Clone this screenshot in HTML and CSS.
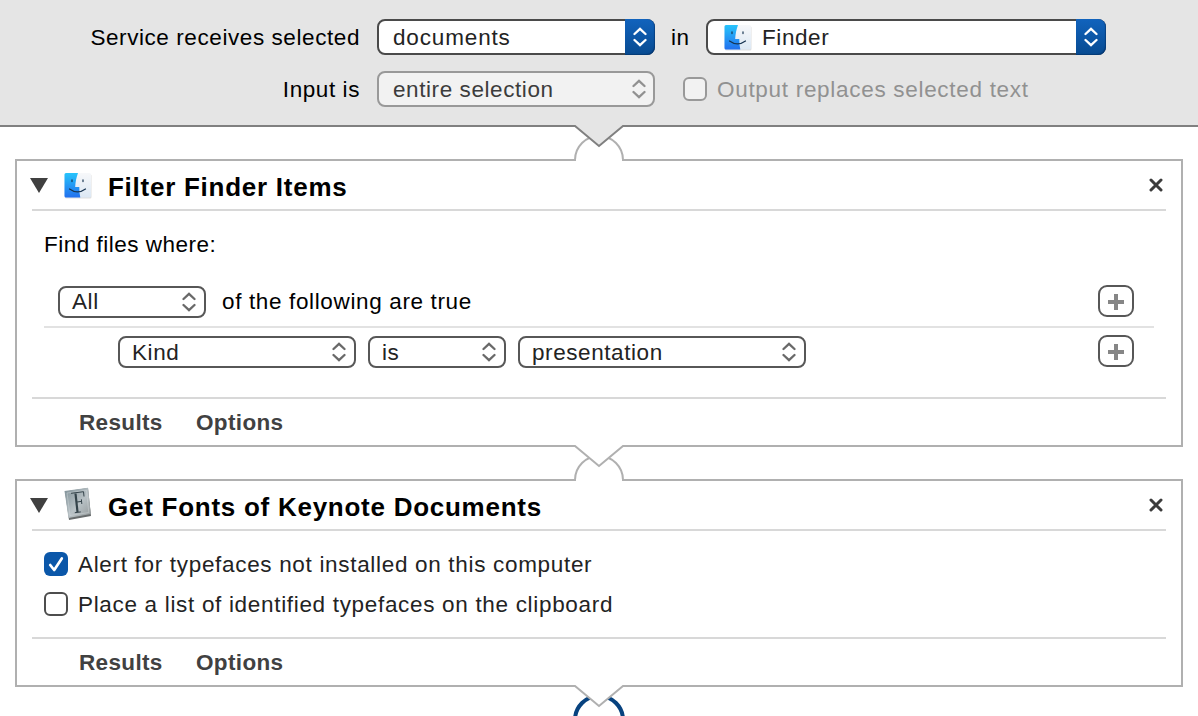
FILE: index.html
```html
<!DOCTYPE html>
<html lang="en">
<head>
<meta charset="utf-8">
<title>Automator Service</title>
<link rel="stylesheet" href="styles.css">
</head>
<body>
<svg class="defs" width="0" height="0" aria-hidden="true">
  <defs>
    <linearGradient id="faceBlue" x1="0" y1="0" x2="0" y2="1"><stop offset="0" stop-color="#27c4fb"/><stop offset="1" stop-color="#2270ee"/></linearGradient>
    <linearGradient id="faceLight" x1="0" y1="0" x2="0" y2="1"><stop offset="0" stop-color="#f7f8fa"/><stop offset="1" stop-color="#dce8f4"/></linearGradient>
    <linearGradient id="metal" x1="0" y1="0" x2="1" y2="1"><stop offset="0" stop-color="#7f9097"/><stop offset=".55" stop-color="#b9c2c6"/><stop offset="1" stop-color="#929899"/></linearGradient>
    <symbol id="finder" viewBox="0 0 28 26">
      <rect x="1" y="1.200" width="26.500" height="24.300" rx="1.5" fill="#000" opacity=".13"/>
      <rect x=".5" y="0" width="26.500" height="24.500" rx="1.5" fill="url(#faceLight)"/>
      <path d="M2 0H14C12.300 4.500 11.500 9 11.200 14H15.300C15.200 17.500 15.500 21 16.300 24.500H2Q.5 24.500 .5 23V1.500Q.5 0 2 0Z" fill="url(#faceBlue)"/>
      <path d="M8 6.800V8.600M19 6.800V8.600M5.500 16Q13.500 21.800 21.500 16" fill="none" stroke="#173451" stroke-width="1.200" stroke-linecap="round"/>
    </symbol>
    <symbol id="arrows" viewBox="0 0 14 20">
      <path d="M1.500 7L7 1.800L12.500 7M1.500 13L7 18.200L12.500 13" fill="none" stroke="currentColor" stroke-width="2.300" stroke-linecap="round" stroke-linejoin="miter"/>
    </symbol>
    <symbol id="triangle" viewBox="0 0 18 15"><path d="M0 0H18L9 15Z" fill="#404040"/></symbol>
    <symbol id="close" viewBox="0 0 14 14"><path d="M2 2L12 12M12 2L2 12" stroke="#3c3c3c" stroke-width="3" stroke-linecap="round"/></symbol>
    <symbol id="plus" viewBox="0 0 16 16"><path d="M8 0V16M0 8H16" stroke="#868686" stroke-width="4"/></symbol>
  </defs>
</svg>

<header class="service">
  <div class="service-row">
    <span class="service-label">Service receives selected</span>
    <div class="popup popup-lg popup-type popup-input">documents<span class="cap"><svg class="arrows"><use href="#arrows"/></svg></span></div>
    <span class="in">in</span>
    <div class="popup popup-lg popup-app"><svg class="finder"><use href="#finder"/></svg>Finder<span class="cap"><svg class="arrows"><use href="#arrows"/></svg></span></div>
  </div>
  <div class="service-row">
    <span class="service-label">Input is</span>
    <div class="popup popup-lg popup-type popup-off">entire selection<svg class="arrows"><use href="#arrows"/></svg></div>
    <span class="check check-off output-check"></span>
    <span class="output-label">Output replaces selected text</span>
  </div>
</header>

<main class="workflow">
  <svg class="link link-top" viewBox="0 0 56 40">
    <path d="M5 36A24 24 0 0 1 53 36" fill="#fff" stroke="#b0b0b0" stroke-width="2"/>
    <path d="M6 35H52V39H6Z" fill="#fff"/>
    <path d="M5 0V2L29 22L53 2V0Z" fill="#e5e5e5"/>
    <path d="M4.500 2H5L29 22L53 2H53.500" fill="none" stroke="#808080" stroke-width="2"/>
  </svg>

  <section class="action">
    <div class="action-head">
      <svg class="triangle"><use href="#triangle"/></svg>
      <svg class="finder"><use href="#finder"/></svg>
      <h2 class="title">Filter Finder Items</h2>
      <svg class="close"><use href="#close"/></svg>
    </div>
    <div class="filter">
      <p class="find">Find files where:</p>
      <div class="rule rule-all">
        <div class="popup w-all">All<svg class="arrows"><use href="#arrows"/></svg></div>
        <span class="rule-text">of the following are true</span>
        <span class="add"><svg class="plus"><use href="#plus"/></svg></span>
      </div>
      <div class="rule rule-kind">
        <div class="popup w-kind">Kind<svg class="arrows"><use href="#arrows"/></svg></div>
        <div class="popup w-is">is<svg class="arrows"><use href="#arrows"/></svg></div>
        <div class="popup w-value">presentation<svg class="arrows"><use href="#arrows"/></svg></div>
        <span class="add"><svg class="plus"><use href="#plus"/></svg></span>
      </div>
    </div>
    <div class="action-foot"><span class="tab tab-results">Results</span><span class="tab">Options</span></div>
    <svg class="link link-bottom" viewBox="0 0 56 40">
      <path d="M5 36A24 24 0 0 1 53 36" fill="#fff" stroke="#b0b0b0" stroke-width="2"/>
      <path d="M6 35H52V39H6Z" fill="#fff"/>
      <path d="M5 0V2L29 22L53 2V0Z" fill="#fff"/>
      <path d="M4.500 2H5L29 22L53 2H53.500" fill="none" stroke="#b0b0b0" stroke-width="2"/>
    </svg>
  </section>

  <section class="action">
    <div class="action-head">
      <svg class="triangle"><use href="#triangle"/></svg>
      <svg class="fontbook" viewBox="0 0 28 34">
        <path d="M1 4.500L24 1L27 29L5 33Z" fill="#686c6d"/>
        <path d="M.5 4L24 .8L26.800 27L4.500 31Z" fill="url(#metal)"/>
        <path d="M3 6L22.500 3.500L24.800 25.500L6 28.500Z" fill="none" stroke="#dce2e4" stroke-opacity=".55" stroke-width=".7"/>
        <path d="M7 6.300L19.500 4.700L20 9.500M10.800 25.700L16.800 24.900M13 15L17.500 14.400M17.400 12.300L17.800 17" fill="none" stroke="#34434a" stroke-width="1"/>
        <path d="M11.500 6.500L13.500 25" stroke="#34434a" stroke-width="2.200"/>
      </svg>
      <h2 class="title">Get Fonts of Keynote Documents</h2>
      <svg class="close"><use href="#close"/></svg>
    </div>
    <div class="choices">
      <div class="choice"><span class="check check-on"><svg class="tick" viewBox="0 0 24 24"><path d="M6.200 13L10.200 18L17.800 6.500" fill="none" stroke="#fff" stroke-width="2.700" stroke-linecap="round" stroke-linejoin="round"/></svg></span><span>Alert for typefaces not installed on this computer</span></div>
      <div class="choice"><span class="check"></span><span>Place a list of identified typefaces on the clipboard</span></div>
    </div>
    <div class="action-foot"><span class="tab tab-results">Results</span><span class="tab">Options</span></div>
    <svg class="link link-bottom" viewBox="0 0 56 40">
      <circle cx="29" cy="36" r="24" fill="#fff" stroke="#07427f" stroke-width="4"/>
      <path d="M5 0V2L29 22L53 2V0Z" fill="#fff"/>
      <path d="M4.500 2H5L29 22L53 2H53.500" fill="none" stroke="#b0b0b0" stroke-width="2"/>
    </svg>
  </section>
</main>
</body>
</html>
```

FILE: styles.css
```css
* { box-sizing: border-box; }

body {
  margin: 0;
  height: 716px;
  overflow: hidden;
  background: #fff;
  color: #000;
  font: 22.5px/33px "Liberation Sans", Arial, sans-serif;
  letter-spacing: .58px;
  white-space: nowrap;
}

svg { display: block; flex: none; }
.defs { position: absolute; }

/* Service settings */
.service {
  display: flex;
  flex-direction: column;
  gap: 16px;
  height: 127px;
  padding-top: 19px;
  background: #e5e5e5;
  border-bottom: 2px solid #808080;
}
.service-row { display: flex; align-items: center; height: 36px; line-height: 37px; }
.service-label { width: 360px; margin-right: 17px; text-align: right; }
.in { width: 51px; padding-left: 16px; }
.output-check { margin: 0 10px 0 28px; }
.output-label { color: #919191; letter-spacing: .7px; }

/* Pop-up buttons */
.popup {
  display: flex;
  align-items: center;
  flex: none;
  height: 32px;
  padding: 0 8px 0 12px;
  border: 2px solid #575757;
  border-radius: 8px;
  background: #fff;
  color: #232323;
}
.popup .arrows { margin-left: auto; }
.arrows { width: 14px; height: 20px; color: #696969; }
.popup-lg { height: 36px; padding: 0 7px 0 14px; border-color: #4a4a4a; }
.popup-type { width: 278px; }
.popup-input { letter-spacing: .85px; }
.popup-app { width: 400px; padding-left: 16px; }
.popup-app .finder { margin-right: 10px; }
.popup-off { background: #f2f2f2; border-color: #999; color: #3c3c3c; }
.popup-off .arrows { color: #919191; }
.cap {
  display: flex;
  align-items: center;
  justify-content: center;
  width: 30px;
  height: 36px;
  margin: -2px -9px -2px auto;
  border-radius: 0 8px 8px 0;
  background: linear-gradient(#1163bd, #084b91);
  box-shadow: inset -1px -1px 1px rgba(0, 40, 90, .5);
}
.cap .arrows { margin: 0; color: #fff; }
.w-all { width: 148px; }
.w-kind { width: 238px; }
.w-is { width: 138px; }
.w-value { width: 288px; }

/* Check boxes */
.check {
  flex: none;
  width: 24px;
  height: 24px;
  border: 2px solid #4d4d4d;
  border-radius: 6px;
  background: #fff;
}
.check-off { background: #f2f2f2; border-color: #999; }
.check-on { border: 0; background: #0b57a9; }
.tick { width: 24px; height: 24px; }

/* Workflow actions */
.workflow { position: relative; padding: 32px 15px 0; }
.action {
  position: relative;
  width: 1168px;
  margin-bottom: 32px;
  border: 2px solid #b0b0b0;
  background: #fff;
}
.action-head {
  display: flex;
  align-items: center;
  height: 50px;
  margin: 0 15px;
  border-bottom: 2px solid #d8d8d8;
}
.triangle { width: 18px; height: 15px; margin: 0 16px 0 -2px; }
.finder { width: 28px; height: 26px; margin-top: 1px; }
.fontbook { width: 28px; height: 34px; margin-top: -2px; }
.title {
  margin: 3px 0 0 16px;
  font-size: 26px;
  font-weight: bold;
  line-height: 32px;
  letter-spacing: .74px;
}
.close { width: 14px; height: 14px; margin: 0 3px 0 auto; }

.filter { height: 186px; padding: 17px 27px 0; }
.find { margin: 0 0 24px; letter-spacing: .5px; }
.rule { display: flex; align-items: center; }
.rule-all { height: 43px; padding: 2px 20px 10px 14px; border-bottom: 2px solid #e2e2e2; }
.rule-kind { gap: 12px; height: 40px; padding: 8px 20px 0 74px; }
.rule-text { margin-left: 16px; letter-spacing: .64px; }
.add {
  display: flex;
  align-items: center;
  justify-content: center;
  width: 36px;
  height: 32px;
  margin: -2px 0 0 auto;
  padding-top: 2px;
  border: 2px solid #575757;
  border-radius: 9px;
}
.plus { width: 16px; height: 16px; }

.choices { display: grid; gap: 8px; height: 106px; padding: 17px 27px 0; align-content: start; }
.choice { display: flex; align-items: center; gap: 10px; height: 32px; color: #232323; letter-spacing: .68px; }

.action-foot {
  display: flex;
  height: 48px;
  margin: 0 15px;
  padding: 8px 47px 0;
  border-top: 2px solid #d8d8d8;
  color: #414141;
  font-weight: bold;
  line-height: 32px;
  letter-spacing: .35px;
}
.tab-results { width: 117px; }

/* Connectors overlap the edges of the panels they join */
.link { position: absolute; z-index: 1; width: 56px; height: 40px; }
.link-top { left: 570px; top: -3px; }
.link-bottom { left: 553px; top: calc(100% - 1px); }
```
